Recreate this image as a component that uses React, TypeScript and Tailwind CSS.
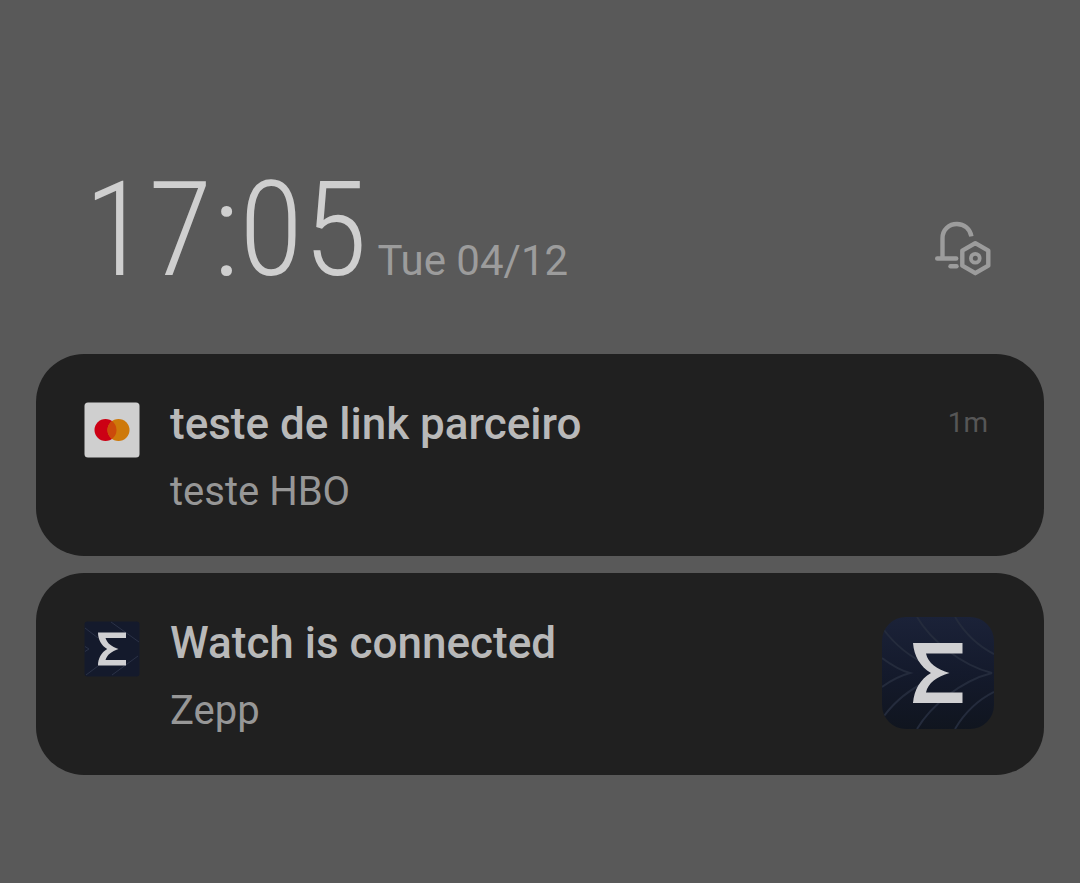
import { useId, type ReactNode } from "react";

function NotificationSettingsIcon() {
  return (
    <svg viewBox="0 0 58 56" fill="none" className="h-14 w-[58px]" aria-hidden="true">
      <path
        d="M8.5 38V18.2C8.5 9.6 15.2 4 22.8 4c7.5 0 13.4 5 14.6 12.4"
        stroke="currentColor"
        strokeWidth="4.4"
      />
      <path d="M3.2 38.5h19" stroke="currentColor" strokeWidth="4.4" strokeLinecap="round" />
      <path d="M16.5 46.3h6" stroke="currentColor" strokeWidth="4.4" strokeLinecap="round" />
      <path
        d="M41.3 23.2 54.3 30.7V45.7L41.3 53.2 28.3 45.7V30.7Z"
        stroke="currentColor"
        strokeWidth="4.4"
        strokeLinejoin="round"
      />
      <circle cx="41.3" cy="38.2" r="4.4" stroke="currentColor" strokeWidth="3.8" />
    </svg>
  );
}

function MastercardIcon() {
  return (
    <svg viewBox="0 0 56 56" className="size-14" aria-hidden="true">
      <rect x="0.5" y="0.5" width="55" height="55" rx="3.5" fill="#cfcfcf" />
      <circle cx="21.5" cy="28" r="11" fill="#cc0014" />
      <circle cx="34.5" cy="28" r="11" fill="#ce790a" />
      <path d="M28 19.1a11 11 0 0 1 0 17.8 11 11 0 0 1 0-17.8Z" fill="#cc4a0b" />
    </svg>
  );
}

function ZeppSmallIcon() {
  return (
    <svg viewBox="0 0 56 56" className="size-14" aria-hidden="true">
      <rect x="0.5" y="0.5" width="55" height="55" rx="3" fill="#141a2c" />
      <path
        d="M1 7 14 17M27 1 55 21M1 25.5 5 28 1 30.5M2 54 14 45M28 54 54 35"
        stroke="#2b3247"
        strokeWidth="1"
        fill="none"
      />
      <path
        d="M14 11.5H42V17H21.5c1.6 5.2 6 8.6 13 11-7 2.4-11.4 5.8-13 11H42v5.5H14c0-7 3.2-13 9.2-16.5C17.2 24.5 14 18.5 14 11.5Z"
        fill="#d0d0d2"
      />
    </svg>
  );
}

function ZeppLargeIcon() {
  const id = useId();
  return (
    <svg viewBox="0 0 112 112" className="size-28" aria-hidden="true">
      <defs>
        <linearGradient id={`${id}-bg`} x1="0" y1="0" x2="0" y2="1">
          <stop offset="0" stopColor="#1b2238" />
          <stop offset="0.5" stopColor="#141a2c" />
          <stop offset="1" stopColor="#10151f" />
        </linearGradient>
        <clipPath id={`${id}-clip`}>
          <rect width="112" height="112" rx="24" />
        </clipPath>
      </defs>
      <g clipPath={`url(#${id}-clip)`}>
        <rect width="112" height="112" fill={`url(#${id}-bg)`} />
        <g stroke="#242b3c" fill="none" strokeWidth="2">
          <path d="M0 41C8 47 17 53 28 56 17 59 8 64 0 70" />
          <path d="M2 13C14 29 28 40 46 48" />
          <path d="M2 99C14 83 28 72 46 64" />
          <path d="M35 0C48 22 78 48 110 56 78 64 48 90 35 112" />
          <path d="M73 0C82 15 96 29 112 37" />
          <path d="M73 112C82 97 96 83 112 75" />
        </g>
        <path
          d="M31 26H80.500V36.500H44C46 46 55 52.500 67.500 56 55 59.500 46 66 44 75.500H80.500V86H31C32 73 38 62.500 49 56 38 49.500 32 39 31 26Z"
          fill="#d0d0d2"
        />
      </g>
    </svg>
  );
}

type NotificationProps = {
  icon: ReactNode;
  title: string;
  text: string;
  children?: ReactNode;
};

function Notification({ icon, title, text, children }: NotificationProps) {
  return (
    <li className="flex items-start rounded-[48px] bg-[#202020] px-12 pt-11 pb-[38px]">
      <div className="mt-1 shrink-0">{icon}</div>
      <div className="ml-[30px] min-w-0 flex-1">
        <h2 className="text-[44px] leading-[52px] font-medium text-[#b9b9b9]">{title}</h2>
        <p className="mt-4 text-[40px] leading-[52px] text-[#979797]">{text}</p>
      </div>
      {children}
    </li>
  );
}

export default function App() {
  return (
    <main className="min-h-screen bg-[#595959] px-9 pt-41 pb-12 font-['Roboto',sans-serif]">
      <header className="flex items-end justify-between pr-13 pl-12">
        <div className="flex items-baseline gap-2.5">
          <time className="font-['Roboto_Condensed','Roboto',sans-serif] text-[132px] leading-[132px] font-light text-[#cfcfcf]">
            17:05
          </time>
          <span className="text-[42px] leading-[52px] text-[#9c9c9c]">Tue 04/12</span>
        </div>
        <button type="button" aria-label="Notification settings" className="mb-5 text-[#9c9c9c]">
          <NotificationSettingsIcon />
        </button>
      </header>

      <ul className="mt-[58px] flex flex-col gap-[17px]">
        <Notification icon={<MastercardIcon />} title="teste de link parceiro" text="teste HBO">
          <time className="mt-2 mr-2 text-[28px] leading-[34px] text-[#565656]">1m</time>
        </Notification>
        <Notification icon={<ZeppSmallIcon />} title="Watch is connected" text="Zepp">
          <div className="mr-0.5 shrink-0">
            <ZeppLargeIcon />
          </div>
        </Notification>
      </ul>
    </main>
  );
}
